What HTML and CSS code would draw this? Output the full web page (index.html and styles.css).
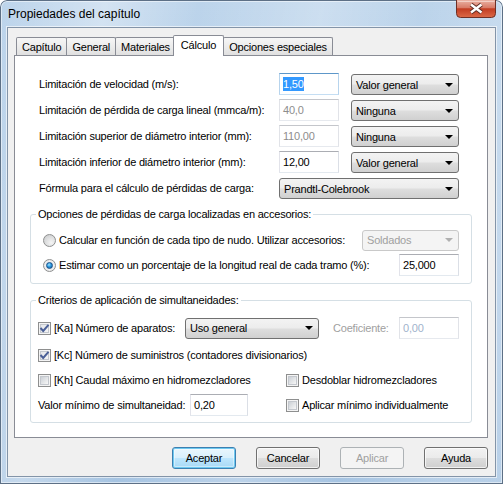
FILE: index.html
```html
<!DOCTYPE html>
<html lang="es">
<head>
<meta charset="utf-8">
<title>Propiedades del capítulo</title>
<link rel="stylesheet" href="styles.css">
</head>
<body>
<div class="window">
  <div class="titlebar">
    <span class="title">Propiedades del capítulo</span>
    <div class="close">
      <svg width="40" height="18" viewBox="0 0 40 18">
        <defs>
          <linearGradient id="cg" x1="0" y1="0" x2="0" y2="1">
            <stop offset="0" stop-color="#eab3a5"/>
            <stop offset="0.45" stop-color="#d87a66"/>
            <stop offset="0.5" stop-color="#c23d22"/>
            <stop offset="1" stop-color="#dc6a48"/>
          </linearGradient>
        </defs>
        <path d="M0.5 0 V13.5 Q0.5 17.5 4.5 17.5 H35.5 Q39.5 17.5 39.5 13.5 V0" fill="url(#cg)" stroke="#6e3026"/>
        <path d="M1.5 1.5 H38.5" stroke="#f3cfc5" stroke-width="1"/>
        <path d="M15 4.5 L25.5 12.5 M25.5 4.5 L15 12.5" stroke="#5b2c24" stroke-width="4.2"/>
        <path d="M15 4.5 L25.5 12.5 M25.5 4.5 L15 12.5" stroke="#ffffff" stroke-width="2.4"/>
      </svg>
    </div>
  </div>
  <div class="client">
    <div class="tabs">
      <div class="tab">Capítulo</div>
      <div class="tab">General</div>
      <div class="tab">Materiales</div>
      <div class="tab active">Cálculo</div>
      <div class="tab">Opciones especiales</div>
    </div>
    <div class="panel">
      <div class="limits">
        <div class="lrow">
          <span class="lbl">Limitación de velocidad (m/s):</span>
          <div class="tb focus"><span class="hl">1,50</span></div>
          <div class="combo"><span>Valor general</span><i class="arrow"></i></div>
        </div>
        <div class="lrow">
          <span class="lbl">Limitación de pérdida de carga lineal (mmca/m):</span>
          <div class="tb disabled">40,0</div>
          <div class="combo"><span>Ninguna</span><i class="arrow"></i></div>
        </div>
        <div class="lrow">
          <span class="lbl">Limitación superior de diámetro interior (mm):</span>
          <div class="tb disabled">110,00</div>
          <div class="combo"><span>Ninguna</span><i class="arrow"></i></div>
        </div>
        <div class="lrow">
          <span class="lbl">Limitación inferior de diámetro interior (mm):</span>
          <div class="tb">12,00</div>
          <div class="combo"><span>Valor general</span><i class="arrow"></i></div>
        </div>
        <div class="lrow">
          <span class="lbl">Fórmula para el cálculo de pérdidas de carga:</span>
          <div class="combo wide"><span>Prandtl-Colebrook</span><i class="arrow"></i></div>
        </div>
      </div>

      <fieldset class="group g1">
        <legend>Opciones de pérdidas de carga localizadas en accesorios:</legend>
        <div class="gbody">
          <div class="row">
            <span class="radio"></span>
            <span class="opt">Calcular en función de cada tipo de nudo. Utilizar accesorios:</span>
            <div class="combo disabled soldados"><span>Soldados</span><i class="arrow"></i></div>
          </div>
          <div class="row">
            <span class="radio on"><i></i></span>
            <span class="opt">Estimar como un porcentaje de la longitud real de cada tramo (%):</span>
            <div class="tb push">25,000</div>
          </div>
        </div>
      </fieldset>

      <fieldset class="group g2">
        <legend>Criterios de aplicación de simultaneidades:</legend>
        <div class="gbody">
          <div class="row ka">
            <span class="cb on"><i><svg width="11" height="11" viewBox="0 0 11 11"><path d="M1.5 5 L4.2 8 L9.5 1.8" fill="none" stroke="#4a5f97" stroke-width="2"/></svg></i></span>
            <span class="opt ka-lbl">[Ka] Número de aparatos:</span>
            <div class="combo uso"><span>Uso general</span><i class="arrow"></i></div>
            <span class="coef">Coeficiente:</span>
            <div class="tb push dis-blue">0,00</div>
          </div>
          <div class="row">
            <span class="cb on"><i><svg width="11" height="11" viewBox="0 0 11 11"><path d="M1.5 5 L4.2 8 L9.5 1.8" fill="none" stroke="#4a5f97" stroke-width="2"/></svg></i></span>
            <span class="opt">[Kc] Número de suministros (contadores divisionarios)</span>
          </div>
          <div class="row split">
            <div class="cell">
              <span class="cb"><i></i></span>
              <span class="opt">[Kh] Caudal máximo en hidromezcladores</span>
            </div>
            <div class="cell">
              <span class="cb"><i></i></span>
              <span class="opt">Desdoblar hidromezcladores</span>
            </div>
          </div>
          <div class="row split">
            <div class="cell">
              <span class="valor-lbl">Valor mínimo de simultaneidad:</span>
              <div class="tb small">0,20</div>
            </div>
            <div class="cell">
              <span class="cb"><i></i></span>
              <span class="opt">Aplicar mínimo individualmente</span>
            </div>
          </div>
        </div>
      </fieldset>
    </div>
    <div class="buttons">
      <button class="btn default">Aceptar</button>
      <button class="btn">Cancelar</button>
      <button class="btn" disabled>Aplicar</button>
      <button class="btn">Ayuda</button>
    </div>
  </div>
</div>
</body>
</html>
```

FILE: styles.css
```css
html, body {
  margin: 0;
  padding: 0;
  background: #ffffff;
}

body {
  font-family: "Liberation Sans", Arial, sans-serif;
  font-size: 11px;
  letter-spacing: -0.2px;
  color: #000000;
}

.window {
  width: 503px;
  height: 484px;
  box-sizing: border-box;
  padding: 0 7px 7px 7px;
  display: flex;
  flex-direction: column;
  border-radius: 7px 7px 0 0;
  background:
    linear-gradient(100deg, rgba(255,255,255,0) 0%, rgba(255,255,255,0.35) 18%, rgba(255,255,255,0) 34%, rgba(255,255,255,0.25) 55%, rgba(255,255,255,0) 72%, rgba(255,255,255,0.2) 88%),
    linear-gradient(180deg, #bcd4eb 0%, #b3cde7 60%, #a6c4e2 100%);
  box-shadow: inset 0 0 0 1px #5d7086, inset 0 0 0 2px rgba(255,255,255,0.5);
}

.titlebar {
  height: 27px;
  display: flex;
  justify-content: space-between;
  align-items: flex-start;
}

.title {
  font-size: 12px;
  letter-spacing: 0;
  line-height: 15px;
  margin: 7px 0 0 1px;
  color: #000;
}

.close {
  width: 40px;
  height: 18px;
}

.close svg {
  display: block;
}

.client {
  flex: 1;
  display: flex;
  flex-direction: column;
  background: #f0f0f0;
  border: 1px solid #8394a8;
  padding: 7px 7px 7px 6px;
  box-shadow: 0 0 0 1px rgba(255,255,255,0.6);
}

.tabs {
  height: 20px;
  display: flex;
  align-items: flex-end;
  margin-left: 2px;
}

.tab {
  height: 18px;
  box-sizing: border-box;
  padding: 0 5px;
  line-height: 18px;
  border: 1px solid #898c95;
  border-bottom: none;
  border-radius: 2px 2px 0 0;
  margin-right: -1px;
  background: linear-gradient(180deg, #f6f6f6 0%, #ececec 50%, #e0e0e0 100%);
  white-space: nowrap;
}

.tab.active {
  height: 21px;
  margin: 0 -1px -1px -2px;
  padding: 0 7px;
  line-height: 18px;
  background: #ffffff;
  position: relative;
  z-index: 1;
}

.panel {
  flex: 1;
  background: #ffffff;
  border: 1px solid #898c95;
  padding: 17px 15px 0 15px;
  display: flex;
  flex-direction: column;
}

.limits {
  margin-left: 9px;
  width: 420px;
  display: flex;
  flex-direction: column;
  gap: 4px;
}

.lrow {
  width: 420px;
  height: 22px;
  display: flex;
  align-items: center;
}

.lbl {
  flex: 0 0 240px;
  min-width: 0;
  white-space: nowrap;
}

.tb {
  width: 60px;
  height: 22px;
  flex: none;
  box-sizing: border-box;
  border: 1px solid;
  border-color: #abadb3 #dbdfe6 #e3e9ef #e2e3ea;
  background: #ffffff;
  padding: 0 3px;
  line-height: 20px;
  white-space: nowrap;
}

.tb.focus {
  border-color: #5d97c9 #b7d4ed #c5def3 #b7d4ed;
}

.tb.disabled {
  color: #8d8d8d;
  border-color: #c4c6cb #e1e3e8 #e6e9ee #e1e3e8;
}

.tb.dis-blue {
  color: #9fb3cc;
  border-color: #c4c6cb #e1e3e8 #e6e9ee #e1e3e8;
}

.hl {
  background: #3399ff;
  color: #ffffff;
  padding: 1px 0;
}

.combo {
  width: 108px;
  height: 21px;
  flex: none;
  box-sizing: border-box;
  border: 1px solid #707070;
  border-radius: 3px;
  background: linear-gradient(180deg, #f3f3f3 0%, #ececec 48%, #dedede 52%, #d0d0d0 100%);
  display: flex;
  align-items: center;
  justify-content: space-between;
  padding: 0 5px 0 4px;
  white-space: nowrap;
}

.lrow .combo {
  margin-left: auto;
  align-self: flex-end;
}

.lrow .combo.wide {
  width: 180px;
}

.arrow {
  width: 0;
  height: 0;
  border-left: 4px solid transparent;
  border-right: 4px solid transparent;
  border-top: 4px solid #000000;
}

.combo.disabled {
  background: #f4f4f4;
  border-color: #c9c9c9;
  color: #a0a0a0;
}

.combo.disabled .arrow {
  border-top-color: #b0b0b0;
}

.group {
  margin: 9px 0 0 0;
  padding: 0;
  border: 1px solid #d5dfe5;
  border-radius: 3px;
}

.group legend {
  margin-left: 5px;
  padding: 0 2px;
  line-height: 13px;
  white-space: nowrap;
}

.g2 {
  margin-top: 10px;
}

.gbody {
  display: flex;
  flex-direction: column;
}

.g1 .gbody {
  padding: 8px 12px 7px 12px;
  gap: 3px;
}

.g2 .gbody {
  padding: 10px 12px 6px 7px;
  gap: 3px;
}

.row {
  height: 22px;
  display: flex;
  align-items: center;
}

.row.ka {
  margin-bottom: 2px;
}

.opt {
  white-space: nowrap;
  margin-left: 3px;
}

.push {
  margin-left: auto;
}

.soldados {
  width: 97px;
  margin-left: auto;
}

.radio {
  width: 13px;
  height: 13px;
  box-sizing: border-box;
  border-radius: 50%;
  border: 1px solid #8e8f8f;
  background: radial-gradient(circle at 65% 70%, #f5f5f5 0%, #d9dadb 60%, #c4c5c6 100%);
  display: flex;
  align-items: center;
  justify-content: center;
  flex: none;
}

.radio.on {
  background: radial-gradient(circle at 50% 50%, #ffffff 0%, #e9eaeb 70%, #d6d7d8 100%);
}

.radio.on i {
  width: 5px;
  height: 5px;
  border-radius: 50%;
  background: radial-gradient(circle at 40% 35%, #a4e3ff 0%, #2a9ae0 45%, #1a4f8c 100%);
  border: 1px solid #18508a;
}

.cb {
  width: 13px;
  height: 13px;
  box-sizing: border-box;
  border: 1px solid #8e8f8f;
  padding: 1px;
  background: #f4f4f4;
  display: flex;
  flex: none;
}

.cb i {
  flex: 1;
  border: 1px solid #c4c8ce;
  background: linear-gradient(135deg, #cbd0d6 0%, #e6e8ea 60%, #f7f7f7 100%);
  display: flex;
  align-items: center;
  justify-content: center;
}

.cb i svg {
  flex: none;
  margin: -2px;
  display: block;
}

.cb.on i {
  background: linear-gradient(135deg, #e4e6e9 0%, #f4f4f5 100%);
}

.ka-lbl {
  width: 131px;
  flex: none;
}

.combo.uso {
  width: 134px;
}

.coef {
  color: #a0a0a0;
  margin-left: 14px;
  white-space: nowrap;
}

.row.split {
  display: grid;
  grid-template-columns: 248px 1fr;
  align-items: center;
}

.cell {
  display: flex;
  align-items: center;
}

.valor-lbl {
  width: 152px;
  flex: none;
  white-space: nowrap;
}

.tb.small {
  width: 58px;
}

.buttons {
  display: flex;
  justify-content: flex-end;
  gap: 20px;
  margin-top: 9px;
}

.btn {
  width: 64px;
  height: 22px;
  box-sizing: border-box;
  font-family: "Liberation Sans", Arial, sans-serif;
  font-size: 11px;
  letter-spacing: -0.2px;
  color: #000000;
  border: 1px solid #707070;
  border-radius: 3px;
  background: linear-gradient(180deg, #f2f2f2 0%, #ebebeb 48%, #dddddd 52%, #cfcfcf 100%);
  box-shadow: inset 0 0 0 1px rgba(255,255,255,0.7);
  padding: 0;
}

.btn.default {
  border-color: #3c7fb1;
  box-shadow: inset 0 0 0 1px #6ec9f0, inset 0 0 0 2px rgba(255,255,255,0.4);
  background: linear-gradient(180deg, #eaf6fd 0%, #d9f0fc 48%, #bee6fd 52%, #a7d9f5 100%);
}

.btn:disabled {
  color: #a0a0a0;
  border-color: #adb2b5;
  background: #f4f4f4;
  box-shadow: none;
}
```
